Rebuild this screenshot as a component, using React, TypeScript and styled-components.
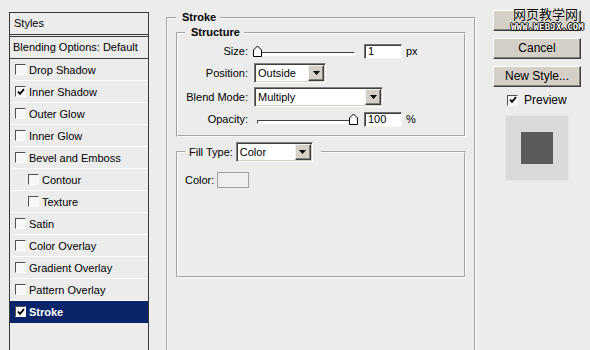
import { createGlobalStyle } from "styled-components"
import styled from "styled-components"

const GlobalStyle = createGlobalStyle`
  html, body {
    margin: 0;
    padding: 0;
    background: #ececec;
  }
  body {
    font-family: "Liberation Sans", Arial, sans-serif;
    font-size: 11px;
    color: #000;
  }
`

const Page = styled.div`
  display: flex;
  align-items: flex-start;
  width: 590px;
  height: 350px;
  overflow: hidden;
  background: #ececec;
`

/* ---------- left styles list ---------- */

const StylesPanel = styled.div`
  margin: 12px 0 0 9px;
  width: 140px;
  height: 360px;
  flex-shrink: 0;
  box-sizing: border-box;
  border: 1px solid #3a3a3a;
  background: #ececec;
`

const PanelHeader = styled.div`
  height: 21px;
  line-height: 21px;
  padding-left: 4px;
  border-bottom: 3px double #3a3a3a;
`

const BlendingRow = styled.div`
  height: 21px;
  line-height: 21px;
  padding-left: 3px;
  border-bottom: 1px solid #3a3a3a;
`

const EffectRow = styled.div<{ $indent?: boolean; $selected?: boolean }>`
  display: flex;
  align-items: center;
  gap: 3px;
  height: 21px;
  padding-left: ${(p) => (p.$indent ? 18 : 5)}px;
  border-bottom: 1px solid ${(p) => (p.$selected ? "#0a246a" : "#fbfbfb")};
  background: ${(p) => (p.$selected ? "#0a246a" : "transparent")};
  color: ${(p) => (p.$selected ? "#fff" : "#000")};
  font-weight: ${(p) => (p.$selected ? "bold" : "normal")};
`

const CheckBox = styled.span<{ $size?: number }>`
  display: inline-flex;
  align-items: center;
  justify-content: center;
  width: ${(p) => p.$size ?? 11}px;
  height: ${(p) => p.$size ?? 11}px;
  box-sizing: border-box;
  border-style: solid;
  border-width: 1px;
  border-color: #505050 #ffffff #ffffff #505050;
  background: #f7f7f7;
  flex-shrink: 0;
`

function Check({ checked, size }: { checked?: boolean; size?: number }) {
  return (
    <CheckBox $size={size}>
      {checked && (
        <svg width="8" height="8" viewBox="0 0 8 8">
          <polyline points="1,3.5 3,5.8 7,1.2" fill="none" stroke="#000" strokeWidth="1.8" />
        </svg>
      )}
    </CheckBox>
  )
}

const effects = [
  { label: "Drop Shadow" },
  { label: "Inner Shadow", checked: true },
  { label: "Outer Glow" },
  { label: "Inner Glow" },
  { label: "Bevel and Emboss" },
  { label: "Contour", indent: true },
  { label: "Texture", indent: true },
  { label: "Satin" },
  { label: "Color Overlay" },
  { label: "Gradient Overlay" },
  { label: "Pattern Overlay" },
  { label: "Stroke", checked: true, selected: true },
]

/* ---------- stroke settings ---------- */

const GroupBox = styled.fieldset<{ $height?: number }>`
  margin: 0;
  padding: 0 7px 6px 7px;
  border: 2px groove #f8f8f8;
  min-width: 0;
  ${(p) => (p.$height ? `height: ${p.$height}px;` : "")}
`

const GroupTitle = styled.legend<{ $bold?: boolean }>`
  padding: 0 4px 0 6px;
  line-height: 13px;
  font-weight: ${(p) => (p.$bold ? "bold" : "normal")};
`

const StrokeBox = styled(GroupBox)`
  margin: 11px 0 0 17px;
  width: 310px;
  box-sizing: border-box;
  flex-shrink: 0;
  padding: 2px 8px 0 8px;
`

const StructureBox = styled(GroupBox)`
  padding-bottom: 8px;
`

const FieldGrid = styled.div`
  display: grid;
  grid-template-columns: 63px auto;
  column-gap: 6px;
  row-gap: 4px;
  align-items: center;
  padding-top: 4px;
`

const FieldLabel = styled.div`
  text-align: right;
`

const FieldControls = styled.div<{ $height: number }>`
  display: flex;
  align-items: center;
  height: ${(p) => p.$height}px;
`

const SliderWrap = styled.div`
  position: relative;
  width: 101px;
  height: 16px;
  margin-right: 9px;
`

const SliderTrack = styled.div`
  margin: 9px 0 0 3px;
  height: 4px;
  box-sizing: border-box;
  border-style: solid;
  border-width: 1px;
  border-color: #404040 #ffffff #ffffff #404040;
  background: #fff;
`

const SliderThumb = styled.svg<{ $end?: boolean }>`
  position: absolute;
  top: 2px;
  ${(p) => (p.$end ? "right: -3px;" : "left: -1px;")}
`

function Slider({ end }: { end?: boolean }) {
  return (
    <SliderWrap>
      <SliderTrack />
      <SliderThumb $end={end} width="9" height="12" viewBox="0 0 9 12">
        <polygon points="0.5,11.5 0.5,5 4.5,1 8.5,5 8.5,11.5" fill="#fff" stroke="#000" />
      </SliderThumb>
    </SliderWrap>
  )
}

const NumberField = styled.div`
  width: 38px;
  height: 15px;
  box-sizing: border-box;
  padding-left: 3px;
  line-height: 12px;
  background: #fff;
  border-style: solid;
  border-width: 1px;
  border-color: #707070 #f4f4f4 #f4f4f4 #707070;
  box-shadow: inset 1px 1px 0 #404040;
`

const Unit = styled.span`
  margin-left: 4px;
`

const SelectBox = styled.div<{ $width: number }>`
  display: flex;
  align-items: stretch;
  width: ${(p) => p.$width}px;
  height: 20px;
  box-sizing: border-box;
  background: #fff;
  border-style: solid;
  border-width: 1px;
  border-color: #808080 #ffffff #ffffff #808080;
  box-shadow: inset 1px 1px 0 #404040, inset -1px -1px 0 #d4d0c8;
  padding: 1px 1px 1px 2px;
`

const SelectValue = styled.span`
  flex: 1;
  line-height: 16px;
  padding-left: 1px;
`

const DropButton = styled.span`
  display: flex;
  align-items: center;
  justify-content: center;
  width: 16px;
  box-sizing: border-box;
  background: #d4d0c8;
  border-style: solid;
  border-width: 1px;
  border-color: #f0f0f0 #404040 #404040 #f0f0f0;
  box-shadow: inset -1px -1px 0 #808080;
`

function Select({ value, width }: { value: string; width: number }) {
  return (
    <SelectBox $width={width}>
      <SelectValue>{value}</SelectValue>
      <DropButton>
        <svg width="7" height="4" viewBox="0 0 7 4">
          <polygon points="0,0 7,0 3.5,4" fill="#000" />
        </svg>
      </DropButton>
    </SelectBox>
  )
}

const FillBox = styled(GroupBox)`
  margin-top: 5px;
`

const FillLegend = styled.legend`
  display: flex;
  align-items: center;
  gap: 3px;
  padding: 0 8px 0 4px;
`

const FillBody = styled.div`
  height: 108px;
  padding-top: 10px;
  box-sizing: border-box;
`

const ColorRow = styled.div`
  display: flex;
  align-items: center;
  gap: 3px;
`

const ColorSwatch = styled.div`
  width: 32px;
  height: 16px;
  box-sizing: border-box;
  border: 1px solid #a0a0a0;
  background: #efefef;
`

/* ---------- right side ---------- */

const SideColumn = styled.div`
  display: flex;
  flex-direction: column;
  margin: 10px 0 0 17px;
  width: 88px;
  flex-shrink: 0;
`

const DialogButton = styled.div`
  position: relative;
  height: 21px;
  box-sizing: border-box;
  margin-bottom: 7px;
  line-height: 18px;
  text-align: center;
  font-size: 12px;
  background: #d4d0c8;
  border-style: solid;
  border-width: 1px;
  border-color: #ffffff #404040 #404040 #ffffff;
  box-shadow: inset -1px -1px 0 #808080;
`

const Watermark = styled.div`
  position: absolute;
  left: 8px;
  right: -4px;
  top: -4px;
  display: flex;
  flex-direction: column;
  align-items: flex-end;
`

const WatermarkCn = styled.span`
  font-family: "Noto Sans CJK SC", sans-serif;
  font-size: 13px;
  line-height: 14px;
  color: #000;
  padding-right: 6px;
  text-shadow: 0 0 2px #fff, 0 0 1px #fff;
`

const WatermarkUrl = styled.span`
  margin-top: 2px;
  font-family: "DejaVu Sans Mono", monospace;
  font-size: 9px;
  line-height: 9px;
  font-weight: bold;
  color: #fff;
  letter-spacing: 0.2px;
  text-shadow: 1px 0 0 #000, -1px 0 0 #000, 0 1px 0 #000, 0 -1px 0 #000;
`

const PreviewRow = styled.div`
  display: flex;
  align-items: center;
  gap: 6px;
  height: 14px;
  margin-top: -1px;
  padding-left: 14px;
  font-size: 12px;
`

const Thumbnail = styled.div`
  display: flex;
  align-items: center;
  justify-content: center;
  width: 64px;
  height: 66px;
  box-sizing: border-box;
  margin: 8px 0 0 12px;
  background: #d9d9d9;
  border: 1px solid #e4e4e4;
`

const ThumbSquare = styled.div`
  width: 32px;
  height: 32px;
  background: #5b5b5b;
`

export default function App() {
  return (
    <>
      <GlobalStyle />
      <Page>
        <StylesPanel>
          <PanelHeader>Styles</PanelHeader>
          <BlendingRow>Blending Options: Default</BlendingRow>
          {effects.map((e) => (
            <EffectRow key={e.label} $indent={e.indent} $selected={e.selected}>
              <Check checked={e.checked} />
              <span>{e.label}</span>
            </EffectRow>
          ))}
        </StylesPanel>

        <StrokeBox $height={400}>
          <GroupTitle $bold>Stroke</GroupTitle>
          <StructureBox>
            <GroupTitle $bold>Structure</GroupTitle>
            <FieldGrid>
              <FieldLabel>Size:</FieldLabel>
              <FieldControls $height={16}>
                <Slider />
                <NumberField>1</NumberField>
                <Unit>px</Unit>
              </FieldControls>

              <FieldLabel>Position:</FieldLabel>
              <FieldControls $height={20}>
                <Select value="Outside" width={72} />
              </FieldControls>

              <FieldLabel>Blend Mode:</FieldLabel>
              <FieldControls $height={20}>
                <Select value="Multiply" width={129} />
              </FieldControls>

              <FieldLabel>Opacity:</FieldLabel>
              <FieldControls $height={16}>
                <Slider end />
                <NumberField>100</NumberField>
                <Unit>%</Unit>
              </FieldControls>
            </FieldGrid>
          </StructureBox>

          <FillBox>
            <FillLegend>
              <span>Fill Type:</span>
              <Select value="Color" width={77} />
            </FillLegend>
            <FillBody>
              <ColorRow>
                <span>Color:</span>
                <ColorSwatch />
              </ColorRow>
            </FillBody>
          </FillBox>
        </StrokeBox>

        <SideColumn>
          <DialogButton>
            <Watermark>
              <WatermarkCn>网页教学网</WatermarkCn>
              <WatermarkUrl>WWW.WEBJX.COM</WatermarkUrl>
            </Watermark>
          </DialogButton>
          <DialogButton>Cancel</DialogButton>
          <DialogButton>New Style...</DialogButton>
          <PreviewRow>
            <Check checked size={11} />
            <span>Preview</span>
          </PreviewRow>
          <Thumbnail>
            <ThumbSquare />
          </Thumbnail>
        </SideColumn>
      </Page>
    </>
  )
}
